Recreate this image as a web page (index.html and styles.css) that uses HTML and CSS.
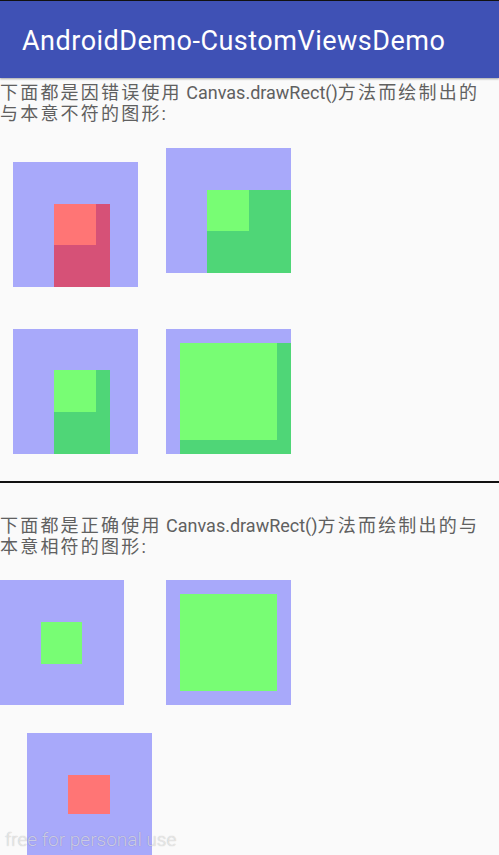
FILE: index.html
```html
<!DOCTYPE html>
<html>
<head>
<meta charset="utf-8">
<link rel="stylesheet" href="styles.css">
</head>
<body>
<div class="screen">
  <header class="appbar"><span class="title">AndroidDemo-CustomViewsDemo</span></header>
  <p class="desc first"><span class="cjk">下面都是因错误使用</span> Canvas.drawRect()<span class="cjk">方法而绘制出的</span><br><span class="cjk">与本意不符的图形</span>:</p>
  <div class="row r1">
    <div class="view v1"><i class="rect dark-red a"></i><i class="rect light-red b"></i></div>
    <div class="view v2"><i class="rect dark-green c"></i><i class="rect light-green b"></i></div>
  </div>
  <div class="row r2">
    <div class="view"><i class="rect dark-green d"></i><i class="rect light-green e"></i></div>
    <div class="view"><i class="rect dark-green f"></i><i class="rect light-green g"></i></div>
  </div>
  <hr class="divider">
  <p class="desc second"><span class="cjk">下面都是正确使用</span> Canvas.drawRect()<span class="cjk">方法而绘制出的与</span><br><span class="cjk">本意相符的图形</span>:</p>
  <div class="row r3">
    <div class="view v5"><i class="rect light-green h"></i></div>
    <div class="view"><i class="rect light-green g"></i></div>
  </div>
  <div class="row r4">
    <div class="view"><i class="rect light-red k"></i></div>
  </div>
  <div class="watermark">free for personal use</div>
</div>
</body>
</html>
```
FILE: styles.css
```css
html, body {
  margin: 0;
  padding: 0;
  background: #fafafa;
}
.screen {
  position: relative;
  width: 499px;
  height: 855px;
  overflow: hidden;
  background: #fafafa;
  border-top: 1px solid #111;
  box-sizing: border-box;
}
.appbar {
  height: 77px;
  background: #3f51b5;
  display: flex;
  align-items: center;
  padding-left: 22px;
  box-shadow: 0 1px 2px rgba(0,0,0,0.35);
  position: relative;
}
.title {
  font-family: Roboto, "Noto Sans", sans-serif;
  font-size: 27px;
  letter-spacing: 0.5px;
  color: #fff;
  padding-top: 3px;
}
.desc {
  margin: 0;
  font-family: Roboto, "Noto Sans CJK SC", sans-serif;
  font-size: 18px;
  line-height: 21px;
  color: #606060;
}
.cjk {
  letter-spacing: 2.2px;
}
.desc.first { padding-top: 4px; }
.row {
  display: flex;
  align-items: flex-start;
}
.view {
  position: relative;
  width: 125px;
  height: 125px;
  background: #a8a9fa;
  flex: none;
}
.r1 { padding-left: 13px; gap: 28px; margin-top: 24px; }
.r1 .v1 { margin-top: 14px; }
.r2 { padding-left: 13px; gap: 28px; margin-top: 42px; }
.divider {
  margin: 27px 0 0;
  border: 0;
  height: 2px;
  background: #111;
}
.desc.second { padding-top: 32px; }
.r3 { margin-top: 23px; padding-left: 0; gap: 42px; }
.r3 .v5 { margin-left: -1px; }
.r4 { margin-top: 28px; padding-left: 27px; }
.rect { position: absolute; display: block; }
.light-red { background: #ff7575; }
.dark-red { background: #d65177; }
.light-green { background: #78fd74; }
.dark-green { background: #4fd677; }
.a { left: 41px; top: 42px; width: 56px; height: 83px; }
.b { left: 41px; top: 42px; width: 42px; height: 41px; }
.c { left: 41px; top: 42px; width: 84px; height: 83px; }
.d { left: 41px; top: 41px; width: 56px; height: 84px; }
.e { left: 41px; top: 41px; width: 42px; height: 42px; }
.f { left: 14px; top: 14px; width: 111px; height: 111px; }
.g { left: 14px; top: 14px; width: 97px; height: 97px; }
.h { left: 42px; top: 42px; width: 41px; height: 42px; }
.k { left: 41px; top: 42px; width: 42px; height: 39px; }
.watermark {
  position: absolute;
  left: 5px;
  bottom: 4px;
  font-family: Roboto, sans-serif;
  font-weight: 300;
  font-size: 19px;
  color: rgba(255,255,255,0.6);
  text-shadow: 0 0 1px rgba(0,0,0,0.3);
}
```
